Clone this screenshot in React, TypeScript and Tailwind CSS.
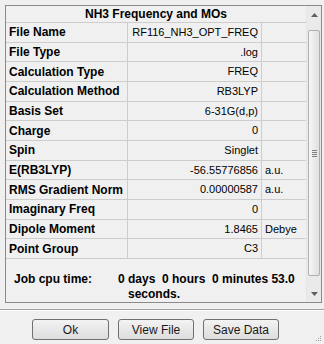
import React from "react";

const rows: [string, string, string][] = [
  ["File Name", "RF116_NH3_OPT_FREQ", ""],
  ["File Type", ".log", ""],
  ["Calculation Type", "FREQ", ""],
  ["Calculation Method", "RB3LYP", ""],
  ["Basis Set", "6-31G(d,p)", ""],
  ["Charge", "0", ""],
  ["Spin", "Singlet", ""],
  ["E(RB3LYP)", "-56.55776856", "a.u."],
  ["RMS Gradient Norm", "0.00000587", "a.u."],
  ["Imaginary Freq", "0", ""],
  ["Dipole Moment", "1.8465", "Debye"],
  ["Point Group", "C3", ""],
];

function Scrollbar() {
  return (
    <div className="flex w-[15px] flex-col border-l border-[#e6e6e6] bg-[#eaeaea]">
      <div className="flex h-[17px] items-center justify-center">
        <svg width="7" height="4" viewBox="0 0 7 4">
          <path d="M0 4 L3.5 0 L7 4 Z" fill="#606060" />
        </svg>
      </div>
      <div className="mx-[1px] mt-[7px] flex h-[246px] items-center justify-center rounded-[2px] border border-[#b0b0b0] bg-gradient-to-r from-[#f6f6f6] to-[#e0e0e0]">
        <div className="flex flex-col gap-[1px]">
          <div className="h-[1px] w-[5px] bg-[#808080]" />
          <div className="h-[1px] w-[5px] bg-[#808080]" />
          <div className="h-[1px] w-[5px] bg-[#808080]" />
          <div className="h-[1px] w-[5px] bg-[#808080]" />
        </div>
      </div>
      <div className="flex flex-1 items-end justify-center pb-[6px]">
        <svg width="7" height="4" viewBox="0 0 7 4">
          <path d="M0 0 L3.5 4 L7 0 Z" fill="#606060" />
        </svg>
      </div>
    </div>
  );
}

function Button({ label, w }: { label: string; w: string }) {
  return (
    <div
      className={`${w} flex h-[21px] items-center justify-center rounded-[3px] border border-[#707070] bg-gradient-to-b from-[#f3f3f3] to-[#dddddd] text-[12px] text-[#1a1a1a]`}
    >
      {label}
    </div>
  );
}

export default function App() {
  return (
    <div
      className="relative h-[344px] w-[324px] overflow-hidden bg-[#f0f0f0] text-black"
      style={{ fontFamily: '"Liberation Sans", Arial, sans-serif' }}
    >
      <div className="ml-[5px] mt-[5px] flex h-[298px] w-[317px] border border-[#8a8a8a]">
        <div className="flex w-[300px] flex-col">
          <div className="flex h-[17px] items-center justify-center border-b border-[#cdcdcd] text-[12px] font-bold">
            NH3 Frequency and MOs
          </div>
          {rows.map(([label, value, unit]) => (
            <div
              key={label}
              className="grid h-[20px] grid-cols-[122px_134px_1fr] border-b border-[#cdcdcd]"
            >
              <div className="flex items-center border-r border-[#cdcdcd] pl-[3px] text-[12px] font-bold">
                {label}
              </div>
              <div className="flex items-center justify-end border-r border-[#cdcdcd] pr-[3px] text-[11px]">
                {value}
              </div>
              <div className="flex items-center pl-[3px] text-[11px]">{unit}</div>
            </div>
          ))}
          <div className="flex flex-1 pt-[13px] text-[12px] font-bold leading-[15px]">
            <div className="w-[112px] pl-[8px]">Job cpu time:</div>
            <div className="flex flex-col">
              <span className="whitespace-pre">0 days  0 hours  0 minutes 53.0</span>
              <span className="pl-[10px]">seconds.</span>
            </div>
          </div>
        </div>
        <Scrollbar />
      </div>
      <div className="mt-[6px] h-[2px] border-t border-[#a0a0a0] border-b-white" style={{ borderBottomWidth: 1 }} />
      <div className="mt-[8px] flex pl-[32px]">
        <Button label="Ok" w="w-[77px]" />
        <div className="w-[9px]" />
        <Button label="View File" w="w-[76px]" />
        <div className="w-[9px]" />
        <Button label="Save Data" w="w-[76px]" />
      </div>
      <div className="absolute bottom-[3px] right-[3px] grid grid-cols-3 gap-[1px]">
        <div className="h-[1px] w-[1px]" />
        <div className="h-[1px] w-[1px]" />
        <div className="h-[1px] w-[1px] bg-[#a0a0a0]" />
        <div className="h-[1px] w-[1px]" />
        <div className="h-[1px] w-[1px] bg-[#a0a0a0]" />
        <div className="h-[1px] w-[1px] bg-[#a0a0a0]" />
        <div className="h-[1px] w-[1px] bg-[#a0a0a0]" />
        <div className="h-[1px] w-[1px] bg-[#a0a0a0]" />
        <div className="h-[1px] w-[1px] bg-[#a0a0a0]" />
      </div>
    </div>
  );
}
